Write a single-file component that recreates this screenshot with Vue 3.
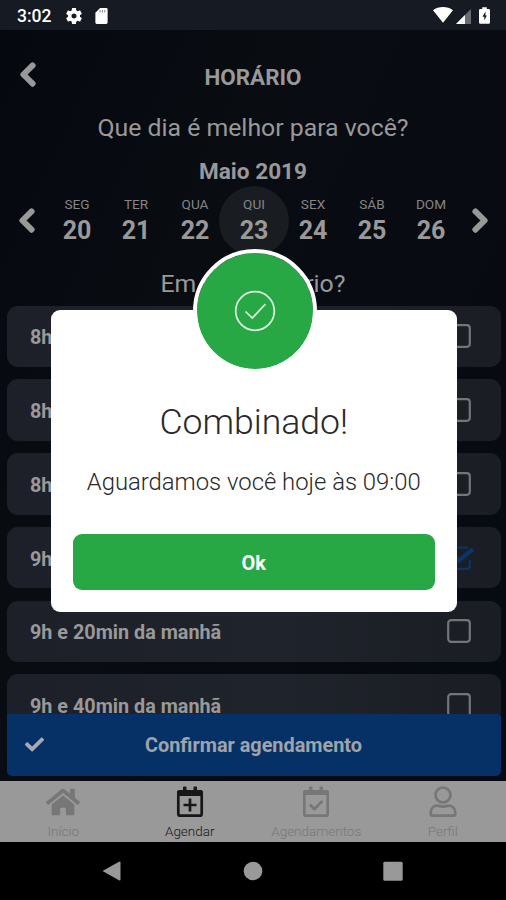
<script setup>
const days = [
  { name: 'SEG', num: 20 },
  { name: 'TER', num: 21 },
  { name: 'QUA', num: 22 },
  { name: 'QUI', num: 23, selected: true },
  { name: 'SEX', num: 24 },
  { name: 'SÁB', num: 25 },
  { name: 'DOM', num: 26 },
]
const slots = [
  { label: '8h da manhã' },
  { label: '8h e 20min da manhã' },
  { label: '8h e 40min da manhã' },
  { label: '9h da manhã', checked: true },
  { label: '9h e 20min da manhã' },
  { label: '9h e 40min da manhã' },
]
const chevron =
  'M34.52 239.03L228.87 44.69c9.37-9.37 24.57-9.37 33.94 0l22.67 22.67c9.36 9.36 9.37 24.52.04 33.9L131.49 256l154.02 154.75c9.34 9.38 9.32 24.54-.04 33.9l-22.67 22.67c-9.37 9.37-24.57 9.37-33.94 0L34.52 272.97c-9.37-9.37-9.37-24.57 0-33.94z'
</script>

<template>
  <div class="screen">
    <header class="status">
      <span class="clock">3:02</span>
      <svg class="gear" viewBox="2 2 20 20"><path d="M19.43 12.98c.04-.32.07-.64.07-.98s-.03-.66-.07-.98l2.11-1.65c.19-.15.24-.42.12-.64l-2-3.46c-.12-.22-.39-.3-.61-.22l-2.49 1c-.52-.4-1.08-.73-1.69-.98l-.38-2.65C14.46 2.18 14.25 2 14 2h-4c-.25 0-.46.18-.49.42l-.38 2.65c-.61.25-1.17.59-1.69.98l-2.49-1c-.23-.09-.49 0-.61.22l-2 3.46c-.13.22-.07.49.12.64l2.11 1.65c-.04.32-.07.65-.07.98s.03.66.07.98l-2.11 1.65c-.19.15-.24.42-.12.64l2 3.46c.12.22.39.3.61.22l2.49-1c.52.4 1.08.73 1.69.98l.38 2.65c.03.24.24.42.49.42h4c.25 0 .46-.18.49-.42l.38-2.65c.61-.25 1.17-.59 1.69-.98l2.49 1c.23.09.49 0 .61-.22l2-3.46c.12-.22.07-.49-.12-.64l-2.11-1.65zM12 15.2c-1.77 0-3.2-1.43-3.2-3.2s1.43-3.2 3.2-3.2 3.2 1.43 3.2 3.2-1.43 3.2-3.2 3.2z" /></svg>
      <svg class="sd" viewBox="0 0 13 17"><path d="M5 0h6.5Q13 0 13 1.5v14q0 1.5-1.5 1.5h-10Q0 17 0 15.500V5z" /><path class="slots" d="M5 2.200v2.500M7.500 2.200v2.500M10 2.200v2.500" /></svg>
      <span class="spacer"></span>
      <svg class="wifi" viewBox="0 0 20 16"><path d="M10 15.800L0 3.200C5.500-1 14.500-1 20 3.200z" /></svg>
      <svg class="signal" viewBox="0 0 16 16"><path class="dim" d="M16 0v16H0z" /><path d="M9.500 6.500V16H0z" /></svg>
      <svg class="battery" viewBox="0 0 12 18"><path d="M3.500 0h5v2h2Q12 2 12 3.500v13q0 1.500-1.500 1.500h-9Q0 18 0 16.500v-13Q0 2 1.500 2h2z" /><path class="bolt" d="M7 4.500L3.800 10.300h2v4.200L8.500 9H7z" /></svg>
    </header>

    <main class="content">
      <div class="titlebar">
        <svg class="chev" viewBox="0 0 320 512"><path :d="chevron" /></svg>
        <h1>HORÁRIO</h1>
      </div>
      <p class="question">Que dia é melhor para você?</p>
      <h2>Maio 2019</h2>
      <div class="week">
        <svg class="chev" viewBox="0 0 320 512"><path :d="chevron" /></svg>
        <div class="days">
          <div v-for="d in days" :key="d.num" class="day" :class="{ selected: d.selected }">
            <span class="dname">{{ d.name }}</span>
            <b>{{ d.num }}</b>
          </div>
        </div>
        <svg class="chev flip" viewBox="0 0 320 512"><path :d="chevron" /></svg>
      </div>
      <p class="question second">Em qual horário?</p>
      <div class="slots-list">
        <div v-for="s in slots" :key="s.label" class="slot">
          <span>{{ s.label }}</span>
          <svg class="box" :class="{ on: s.checked }" viewBox="0 0 28 24">
            <path v-if="s.checked" d="M21 1.500H4Q1.200 1.500 1.200 4v16Q1.200 22.800 4 22.800h16Q22.800 22.800 22.800 20v-6" />
            <rect v-else x="1.200" y="1.200" width="21.600" height="21.600" rx="3" />
            <path v-if="s.checked" class="tick" d="M7 9.500l5 5L26 3" />
          </svg>
        </div>
      </div>
      <button class="confirm">
        <svg viewBox="0 0 512 512"><path d="M173.898 439.404l-166.400-166.400c-9.997-9.997-9.997-26.206 0-36.204l36.203-36.204c9.997-9.998 26.207-9.998 36.204 0L192 312.690 432.095 72.596c9.997-9.997 26.207-9.997 36.204 0l36.203 36.204c9.997 9.997 9.997 26.206 0 36.204l-294.400 294.401c-9.998 9.997-26.207 9.997-36.204-.001z" /></svg>
        <span>Confirmar agendamento</span>
      </button>
    </main>

    <nav class="tabs">
      <div class="tab">
        <svg class="home" viewBox="0 0 576 512"><path d="M280.370 148.260L96 300.110V464a16 16 0 0 0 16 16l112.060-.29a16 16 0 0 0 15.920-16V368a16 16 0 0 1 16-16h64a16 16 0 0 1 16 16v95.640a16 16 0 0 0 16 16.050L464 480a16 16 0 0 0 16-16V300L295.670 148.260a12.190 12.190 0 0 0-15.300 0zM571.600 251.470L488 182.560V44.050a12 12 0 0 0-12-12h-56a12 12 0 0 0-12 12v72.610L318.470 43a48 48 0 0 0-61 0L4.340 251.470a12 12 0 0 0-1.600 16.900l25.500 31A12 12 0 0 0 45.150 301l235.220-193.740a12.190 12.190 0 0 1 15.300 0L530.900 301a12 12 0 0 0 16.900-1.600l25.500-31a12 12 0 0 0-1.700-16.930z" /></svg>
        <span>Início</span>
      </div>
      <div class="tab active">
        <svg class="line" viewBox="0 0 28 32"><path class="solid" d="M1 6.500Q1 4 3.500 4H7V1.500Q7 .5 8 .5h1.500q1 0 1 1V4h7V1.500q0-1 1-1H20q1 0 1 1V4h3.500Q27 4 27 6.500V10H1z" /><rect x="2.300" y="5.300" width="23.400" height="24.400" rx="2" /><path d="M14 12.500v13M7.500 19h13" /></svg>
        <span>Agendar</span>
      </div>
      <div class="tab">
        <svg class="line" viewBox="0 0 28 32"><path class="solid" d="M1 6.500Q1 4 3.500 4H7V1.500Q7 .5 8 .5h1.500q1 0 1 1V4h7V1.500q0-1 1-1H20q1 0 1 1V4h3.500Q27 4 27 6.500V9H1z" /><rect x="2.300" y="5.300" width="23.400" height="24.400" rx="2" /><path d="M7.800 18.500l4.500 4.500L20.500 15" /></svg>
        <span>Agendamentos</span>
      </div>
      <div class="tab">
        <svg class="line" viewBox="0 0 28 32"><circle cx="14" cy="9" r="7.500" /><path d="M8.500 19.700c2 0 3 1 5.500 1s3.500-1 5.500-1c4 0 6.800 3 6.800 7v1q0 2-2 2H3.700q-2 0-2-2v-1c0-4 2.800-7 6.800-7z" /></svg>
        <span>Perfil</span>
      </div>
    </nav>

    <footer class="navbar">
      <svg viewBox="0 0 20 20"><path d="M0.500 10L17 .8Q18.500 0 18.500 1.500v17q0 1.500-1.500.7z" /></svg>
      <svg viewBox="0 0 20 20"><circle cx="10" cy="10" r="9.300" /></svg>
      <svg viewBox="0 0 20 20"><rect x=".3" y=".8" width="19.400" height="19" rx="1.500" /></svg>
    </footer>

    <section class="modal">
      <div class="badge">
        <svg viewBox="0 0 42 42"><circle cx="21" cy="21" r="19.300" /><path d="M11.500 21.500l6.800 6.500L31.500 14" /></svg>
      </div>
      <h3>Combinado!</h3>
      <p>Aguardamos você hoje às 09:00</p>
      <button class="ok">Ok</button>
    </section>
  </div>
</template>

<style>
body {
  background: #000;
}
</style>

<style scoped>
.screen {
  position: relative;
  width: 506px;
  height: 900px;
  overflow: hidden;
  display: flex;
  flex-direction: column;
  background: #000;
  color: #999;
  font-family: Roboto, sans-serif;
}
h1, h2, h3, p {
  margin: 0;
}
svg {
  display: block;
  flex: none;
}
button {
  border: 0;
  font-family: inherit;
}
.status {
  flex: none;
  height: 30px;
  display: flex;
  align-items: center;
  padding: 2px 16px 0 17px;
  box-sizing: border-box;
  background: #161a23;
  color: #fff;
  fill: #fff;
}
.clock {
  width: 49px;
  font-size: 17.500px;
  font-weight: 500;
}
.gear {
  width: 16px;
  height: 16px;
}
.sd {
  width: 13px;
  height: 16px;
  margin-left: 13px;
}
.slots {
  stroke: #777;
  stroke-width: 1;
}
.spacer {
  flex: 1;
}
.wifi {
  width: 20px;
  height: 16px;
  margin-top: -2px;
}
.signal {
  width: 15px;
  height: 15px;
  margin: 0 8px 0 3px;
}
.dim {
  fill: #6a6c72;
}
.battery {
  width: 11px;
  height: 17px;
  margin-top: -2px;
}
.bolt {
  fill: #161a23;
}
.content {
  flex: none;
  height: 751px;
  display: flex;
  flex-direction: column;
  align-items: center;
  background: linear-gradient(115deg, #05080f 0%, #090c11 35%, #080b11 60%, #060a12 100%);
}
.titlebar {
  width: 100%;
  height: 92px;
  display: grid;
  grid-template-columns: 56px 1fr 56px;
  align-items: center;
  justify-items: center;
}
.chev {
  width: 18px;
  height: 27px;
  overflow: visible;
  fill: #999;
  stroke: #999;
  stroke-width: 30;
}
.titlebar .chev {
  margin-top: -4px;
}
.flip {
  transform: scaleX(-1);
}
h1 {
  margin-top: 1px;
  font-size: 22.400px;
  font-weight: 700;
  line-height: 28px;
}
.question {
  height: 30px;
  margin-top: -9px;
  font-size: 24.800px;
  line-height: 30px;
}
h2 {
  margin-top: 15px;
  font-size: 22.600px;
  font-weight: 700;
  line-height: 28px;
}
.week {
  width: 100%;
  height: 70px;
  display: grid;
  grid-template-columns: 47.500px 413px 1fr;
  align-items: center;
}
.week .chev {
  margin: -2px 0 0 18px;
}
.week .flip {
  margin-left: 10.500px;
}
.days {
  display: grid;
  grid-template-columns: repeat(7, 1fr);
  justify-items: center;
}
.day {
  width: 70px;
  height: 70px;
  margin: 0 -6px;
  border-radius: 50%;
  display: flex;
  flex-direction: column;
  align-items: center;
}
.selected {
  background: #191c20;
}
.dname {
  margin-top: 10px;
  font-size: 13.600px;
  line-height: 17px;
  color: #858585;
}
.day b {
  margin-top: 4px;
  font-size: 25px;
  line-height: 28px;
}
.question.second {
  margin-top: 13px;
}
.slots-list {
  width: 494px;
  height: 408px;
  margin-top: 6.500px;
  margin-left: 1px;
  display: flex;
  flex-direction: column;
  gap: 12.300px;
  overflow: hidden;
}
.slot {
  flex: none;
  height: 61.500px;
  border-radius: 11px;
  box-sizing: border-box;
  padding: 3px 24px 0 23.500px;
  display: flex;
  align-items: center;
  justify-content: space-between;
  background: linear-gradient(90deg, #1d2029, #1f232b 55%, #1a1d23);
  font-size: 19.800px;
  font-weight: 700;
}
.box {
  width: 28px;
  height: 24px;
  margin: -3px 1.500px 0 0;
  fill: none;
  stroke: #73757a;
  stroke-width: 2.200;
}
.box.on {
  stroke: #0b3468;
}
.tick {
  stroke-width: 4.500;
}
.confirm {
  width: 494px;
  height: 62px;
  margin-left: 1px;
  padding: 2px 18px 0;
  display: grid;
  grid-template-columns: 20px 1fr 20px;
  align-items: center;
  border-radius: 0 3px 5px 5px;
  background: #053166;
  color: #a0a3aa;
  font-size: 19.850px;
  font-weight: 700;
}
.confirm svg {
  width: 19px;
  height: 19px;
  margin-top: -3px;
  fill: #a7aab2;
}
.tabs {
  flex: none;
  height: 61px;
  display: grid;
  grid-template-columns: repeat(4, 1fr);
  background: #999;
}
.tab {
  display: flex;
  flex-direction: column;
  align-items: center;
  padding-top: 5px;
  color: #777;
  fill: #777;
  stroke: #777;
  font-size: 13.500px;
  font-weight: 300;
}
.tab.active {
  color: #141414;
  fill: #171717;
  stroke: #171717;
}
.tab span {
  margin-top: 4px;
  line-height: 18px;
}
.home {
  width: 34px;
  height: 32px;
  stroke: none;
}
.line {
  width: 28px;
  height: 32px;
  fill: none;
  stroke-width: 2.700;
}
.tab .solid {
  fill: #777;
  stroke: none;
}
.active .solid {
  fill: #171717;
}
.navbar {
  height: 58px;
  display: flex;
  align-items: center;
  justify-content: space-between;
  padding: 0 103px 0 102px;
}
.navbar svg {
  width: 20px;
  height: 20px;
  fill: #999;
}
.modal {
  position: absolute;
  left: 51px;
  top: 310px;
  width: 405.500px;
  height: 302px;
  box-sizing: border-box;
  padding: 0 22px 22px;
  border-radius: 9px;
  background: #fff;
  color: #292929;
  display: flex;
  flex-direction: column;
  text-align: center;
}
.badge {
  width: 116px;
  height: 116px;
  margin: -61.500px 0 0 119.500px;
  flex: none;
  border: 4.500px solid #fff;
  border-radius: 50%;
  background: #28a745;
  background-clip: padding-box;
  display: flex;
  align-items: center;
  justify-content: center;
}
.badge svg {
  width: 42px;
  height: 42px;
  fill: none;
  stroke: #dff5e3;
  stroke-width: 1.700;
}
h3 {
  margin-top: 28px;
  font-size: 35.600px;
  font-weight: 300;
  line-height: 42px;
}
.modal p {
  margin-top: 24px;
  font-size: 23.850px;
  font-weight: 300;
  line-height: 30px;
}
.ok {
  height: 56px;
  margin-top: auto;
  padding: 2px 0 0;
  border-radius: 9px;
  background: #28a745;
  color: #fff;
  font-size: 20px;
  font-weight: 700;
}
</style>
